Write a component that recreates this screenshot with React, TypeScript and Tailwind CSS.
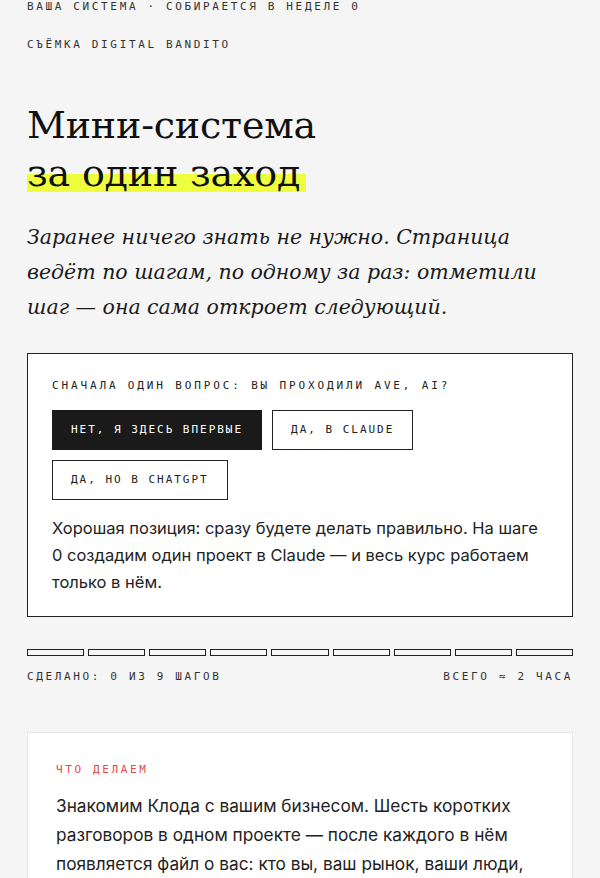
import React from "react";

const steps = Array.from({ length: 9 });

export default function App() {
  return (
    <div className="min-h-screen bg-[#f5f5f5] px-[27px] text-[#1a1a1a]">
      <p className="font-['DejaVu_Sans_Mono',monospace] text-[11px] leading-[14px] tracking-[0.24em] text-[#333]">
        ВАША СИСТЕМА · СОБИРАЕТСЯ В НЕДЕЛЕ 0
      </p>
      <p className="mt-[24px] font-['DejaVu_Sans_Mono',monospace] text-[11px] leading-[14px] tracking-[0.24em] text-[#333]">
        СЪЁМКА DIGITAL BANDITO
      </p>

      <h1 className="mt-[49px] font-['DejaVu_Serif',serif] text-[38px] leading-[48px] font-normal tracking-[-0.005em] text-[#111]">
        Мини-система
        <br />
        <span className="bg-[linear-gradient(to_bottom,transparent_52%,#f0ff3d_52%,#f0ff3d_94%,transparent_94%)] pr-[6px]">
          за один заход
        </span>
      </h1>

      <p className="mt-[23px] font-['DejaVu_Serif',serif] text-[20.5px] italic leading-[35px] text-[#1a1a1a]">
        Заранее ничего знать не нужно. Страница ведёт по шагам, по одному за раз: отметили шаг — она сама откроет следующий.
      </p>

      <section className="mt-[28px] border-[1.5px] border-[#222] bg-white px-6 pt-6 pb-5">
        <p className="font-['DejaVu_Sans_Mono',monospace] text-[11px] leading-[16px] tracking-[0.26em] text-[#222]">
          СНАЧАЛА ОДИН ВОПРОС: ВЫ ПРОХОДИЛИ AVE, AI?
        </p>
        <div className="mt-4 flex flex-wrap gap-[10px]">
          <button className="h-10 border-[1.5px] border-[#1a1a1a] bg-[#1a1a1a] px-[18px] font-['DejaVu_Sans_Mono',monospace] text-[11px] tracking-[0.18em] text-white">
            НЕТ, Я ЗДЕСЬ ВПЕРВЫЕ
          </button>
          <button className="h-10 border-[1.5px] border-[#222] bg-white px-[18px] font-['DejaVu_Sans_Mono',monospace] text-[11px] tracking-[0.18em] text-[#222]">
            ДА, В CLAUDE
          </button>
          <button className="h-10 border-[1.5px] border-[#222] bg-white px-[18px] font-['DejaVu_Sans_Mono',monospace] text-[11px] tracking-[0.18em] text-[#222]">
            ДА, НО В CHATGPT
          </button>
        </div>
        <p className="mt-[15px] font-['Inter',sans-serif] text-[16.5px] leading-[27px] text-[#222]">
          Хорошая позиция: сразу будете делать правильно. На шаге 0 создадим один проект в Claude — и весь курс работаем только в нём.
        </p>
      </section>

      <div className="mt-[32px] flex gap-[4px]">
        {steps.map((_, i) => (
          <div key={i} className="h-[7px] flex-1 border-[1.5px] border-[#222] bg-[#f7f7f7]" />
        ))}
      </div>
      <div className="mt-[14px] flex justify-between font-['DejaVu_Sans_Mono',monospace] text-[11px] leading-[14px] tracking-[0.24em] text-[#333]">
        <span>СДЕЛАНО: 0 ИЗ 9 ШАГОВ</span>
        <span>ВСЕГО ≈ 2 ЧАСА</span>
      </div>

      <section className="mt-[48px] border border-[#e6e6e6] bg-white px-7 pt-[30px] pb-8">
        <p className="font-['DejaVu_Sans_Mono',monospace] text-[11px] leading-[14px] tracking-[0.24em] text-[#e5484d]">
          ЧТО ДЕЛАЕМ
        </p>
        <p className="mt-[14px] font-['Inter',sans-serif] text-[17.25px] leading-[29px] text-[#222]">
          Знакомим Клода с вашим бизнесом. Шесть коротких разговоров в одном проекте — после каждого в нём появляется файл о вас: кто вы, ваш рынок, ваши люди, ваши продукты и то, как вы говорите с клиентами.
        </p>
      </section>
    </div>
  );
}
